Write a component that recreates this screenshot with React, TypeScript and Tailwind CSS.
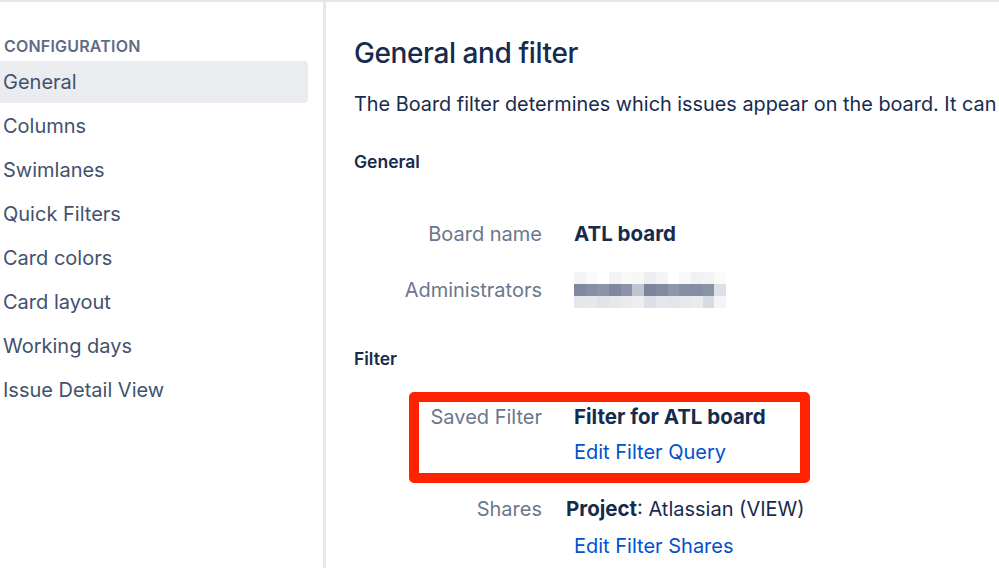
import React from 'react';

const navItems = [
  'General',
  'Columns',
  'Swimlanes',
  'Quick Filters',
  'Card colors',
  'Card layout',
  'Working days',
  'Issue Detail View',
];

// pixelated admin names (three rows of blocks)
const blurTop = [
  'bg-[#f3f4f6]', 'bg-[#fafafa]', 'bg-[#ffffff]', 'bg-[#f2f3f5]', 'bg-[#f8f8f9]', 'bg-[#f7f7f8]', 'bg-[#eceef1]',
  'bg-[#f3f4f6]', 'bg-[#ffffff]', 'bg-[#f8f8f9]', 'bg-[#f0f1f3]', 'bg-[#f2f3f5]', 'bg-[#fafafa]',
];
const blurMid = [
  'bg-[#7e889f]', 'bg-[#858fa5]', 'bg-[#8b94a8]', 'bg-[#7e889f]', 'bg-[#8a93a7]', 'bg-[#c0c5d0]', 'bg-[#7b859c]',
  'bg-[#808aa0]', 'bg-[#8d96aa]', 'bg-[#858ea4]', 'bg-[#858ea4]', 'bg-[#8a93a7]', 'bg-[#dde0e7]',
];
const blurBottom = [
  'bg-[#e5e7ec]', 'bg-[#e6e8ec]', 'bg-[#e0e3e8]', 'bg-[#e6e8ec]', 'bg-[#e9ebee]', 'bg-[#eceef1]', 'bg-[#dcdfe5]',
  'bg-[#e5e7ec]', 'bg-[#e3e5ea]', 'bg-[#e6e8ec]', 'bg-[#e9ebee]', 'bg-[#d8dbe2]', 'bg-[#f3f4f6]',
];

const BlurRow: React.FC<{ cells: string[] }> = ({ cells }) => (
  <div className="flex">
    {cells.map((c, i) => (
      <div key={i} className={`h-[12px] w-[11.7px] ${c}`}></div>
    ))}
  </div>
);

const Sidebar: React.FC = () => (
  <aside className="w-[326px] shrink-0 border-r-[3px] border-[#e6e8ec] pr-[15px] pt-[34px]">
    <div className="pl-[4px] text-[16px] font-semibold leading-[20px] tracking-[0.2px] text-[#5e6c84]">CONFIGURATION</div>
    <nav className="mt-[5px] flex flex-col gap-[2px]">
      {navItems.map((item, i) => (
        <div
          key={item}
          className={`flex h-[42px] items-center rounded-r-[4px] pl-[3px] text-[20px] text-[#42526e] ${
            i === 0 ? 'bg-[#ebecf0]' : ''
          }`}
        >
          {item}
        </div>
      ))}
    </nav>
  </aside>
);

const Label: React.FC<{ children: React.ReactNode }> = ({ children }) => (
  <div className="w-[188px] shrink-0 text-right text-[20px] leading-[28px] text-[#6b778c]">{children}</div>
);

export default function App() {
  return (
    <div
      className="flex h-[568px] w-full overflow-hidden border-t-[2px] border-[#e4e6ea] bg-white text-[#172b4d]"
      style={{ fontFamily: 'Inter, "Noto Sans", "Liberation Sans", sans-serif' }}
    >
      <Sidebar />
      <main className="min-w-0 flex-1 overflow-hidden pl-[28px] pt-[33px]">
        <h1 className="whitespace-nowrap text-[28px] font-medium leading-[36px] tracking-[-0.4px]">General and filter</h1>
        <p className="mt-[19px] whitespace-nowrap text-[19.85px] leading-[28px]">
          The Board filter determines which issues appear on the board. It can
        </p>

        <h2 className="mt-[32px] text-[17.5px] font-semibold leading-[24px]">General</h2>

        <div className="mt-[46px] flex items-center gap-[32px]">
          <Label>Board name</Label>
          <div className="text-[20.5px] font-bold leading-[28px]">ATL board</div>
        </div>
        <div className="mt-[24px] flex items-center gap-[32px]">
          <Label>Administrators</Label>
          <div className="flex flex-col">
            <BlurRow cells={blurTop} />
            <BlurRow cells={blurMid} />
            <BlurRow cells={blurBottom} />
          </div>
        </div>

        <h2 className="mt-[39px] text-[17.5px] font-semibold leading-[24px]">Filter</h2>

        <div className="relative mt-[32px]">
          <div className="flex gap-[32px]">
            <Label>Saved Filter</Label>
            <div className="flex flex-col gap-[7px]">
              <div className="text-[20.5px] font-bold leading-[28px]">Filter for ATL board</div>
              <a className="text-[20px] leading-[28px] text-[#0052cc]">Edit Filter Query</a>
            </div>
          </div>
          <div className="pointer-events-none absolute left-[55px] top-[-11px] h-[91px] w-[401px] rounded-[5px] border-[10px] border-[#ff2200]"></div>
        </div>

        <div className="mt-[29px] flex gap-[24px]">
          <Label>Shares</Label>
          <div className="flex flex-col gap-[9px]">
            <div className="text-[20px] leading-[28px]">
              <span className="text-[20.5px] font-bold">Project</span>: Atlassian (VIEW)
            </div>
            <a className="ml-[8px] text-[20px] leading-[28px] text-[#0052cc]">Edit Filter Shares</a>
          </div>
        </div>
      </main>
    </div>
  );
}
